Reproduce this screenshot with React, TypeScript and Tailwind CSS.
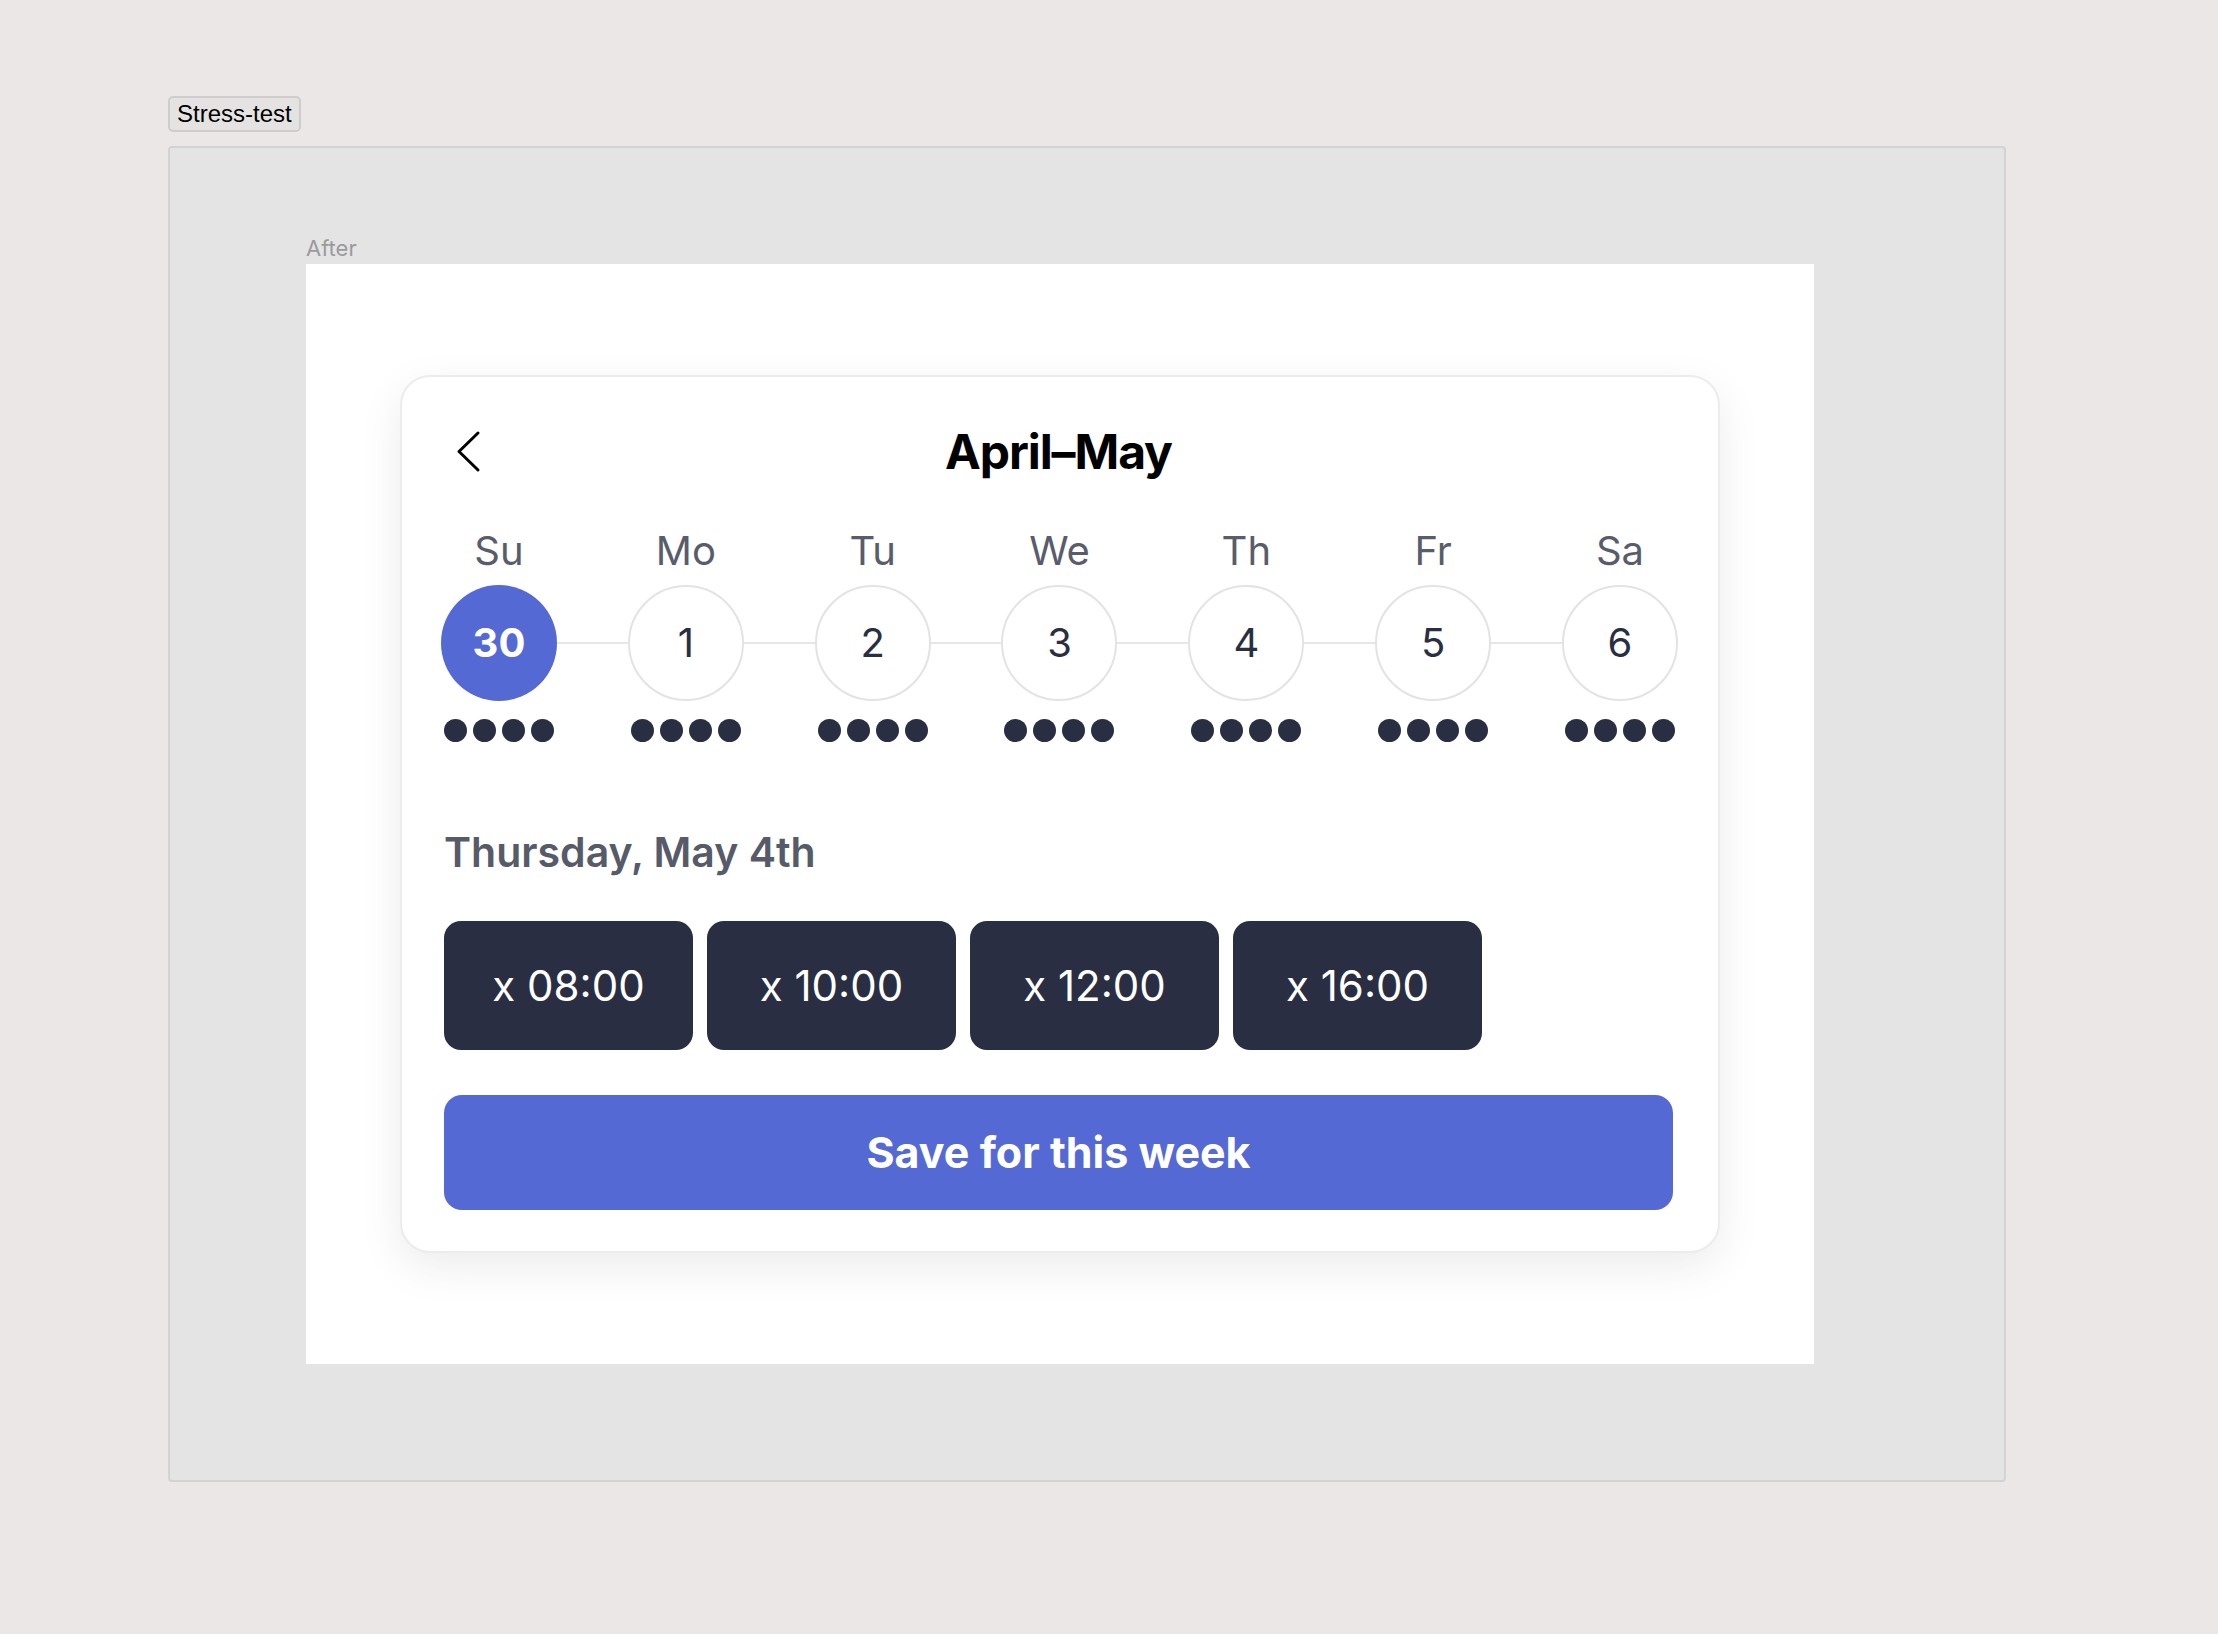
import React from "react";

const days = [
  { label: "Su", num: "30", active: true },
  { label: "Mo", num: "1" },
  { label: "Tu", num: "2" },
  { label: "We", num: "3" },
  { label: "Th", num: "4" },
  { label: "Fr", num: "5" },
  { label: "Sa", num: "6" },
];

const times = ["08:00", "10:00", "12:00", "16:00"];

function DayCol({ label, num, active }: { label: string; num: string; active?: boolean }) {
  return (
    <div className="flex w-[116px] shrink-0 flex-col items-center">
      <div className="text-[40px] leading-[48px] text-[#595c6b]">{label}</div>
      <div
        className={
          active
            ? "mt-[10px] flex h-[116px] w-[116px] items-center justify-center rounded-full bg-[#5469d4] text-[40px] font-bold text-white"
            : "mt-[10px] flex h-[116px] w-[116px] items-center justify-center rounded-full border-2 border-[#e3e3e6] bg-white text-[40px] text-[#2a2e42]"
        }
      >
        {num}
      </div>
      <div className="mt-[18px] flex gap-[6px]">
        {[0, 1, 2, 3].map((i) => (
          <div key={i} className="h-[23px] w-[23px] rounded-full bg-[#2a2e42]" />
        ))}
      </div>
    </div>
  );
}

export default function App() {
  return (
    <div className="h-[1634px] w-[2218px] bg-[#ebe7e6] pl-[168px] pt-[96px]" style={{ fontFamily: "Inter, 'Noto Sans', sans-serif" }}>
      <div
        className="inline-flex h-[36px] items-center rounded-[5px] border-2 border-[#cfcdcc] bg-[#e5e3e2] px-[7px] text-[24px] text-black"
        style={{ fontFamily: "'Liberation Sans', Arial, sans-serif" }}
      >
        Stress-test
      </div>
      <div className="mt-[14px] h-[1336px] w-[1838px] rounded-[4px] border-2 border-[#d3d3d3] bg-[#e4e4e4] pl-[136px] pt-[87px]">
        <div className="text-[22px] leading-[27px] text-[#9b9b9b]">After</div>
        <div className="mt-[2px] flex h-[1100px] w-[1508px] items-center justify-center bg-white">
          <div className="w-[1320px] rounded-[30px] border-2 border-[#ececec] bg-white pb-[41px] pl-[42px] pr-[45px] pt-[47px] shadow-[0_14px_44px_rgba(0,0,0,0.08)]">
            <div className="grid grid-cols-[1fr_auto_1fr] items-center">
              <div className="flex">
                <svg width="48" height="56" viewBox="0 0 48 56" fill="none">
                  <path d="M34 9 L15 27.5 L34 46" stroke="#000" strokeWidth="3" strokeLinecap="round" strokeLinejoin="round" />
                </svg>
              </div>
              <div className="text-[48px] font-bold leading-[56px] tracking-[-1.1px] text-black">April–May</div>
              <div />
            </div>
            <div className="ml-[-3px] mr-[-5px] mt-[47px] flex">
              {days.map((d, i) => (
                <React.Fragment key={d.label}>
                  {i > 0 && <div className="mt-[115px] h-[2px] flex-1 bg-[#e6e6e8]" />}
                  <DayCol {...d} />
                </React.Fragment>
              ))}
            </div>
            <div className="mt-[86px] text-[41px] font-semibold leading-[48px] text-[#575a68]">Thursday, May 4th</div>
            <div className="mt-[45px] flex gap-[14px]">
              {times.map((t) => (
                <div key={t} className="flex h-[129px] w-[249px] items-center justify-center rounded-[17px] bg-[#2a2e42] text-[42px] text-white">
                  x {t}
                </div>
              ))}
            </div>
            <div className="mt-[45px] flex h-[115px] items-center justify-center rounded-[18px] bg-[#5469d4] text-[43px] font-bold text-white">
              Save for this week
            </div>
          </div>
        </div>
      </div>
    </div>
  );
}
